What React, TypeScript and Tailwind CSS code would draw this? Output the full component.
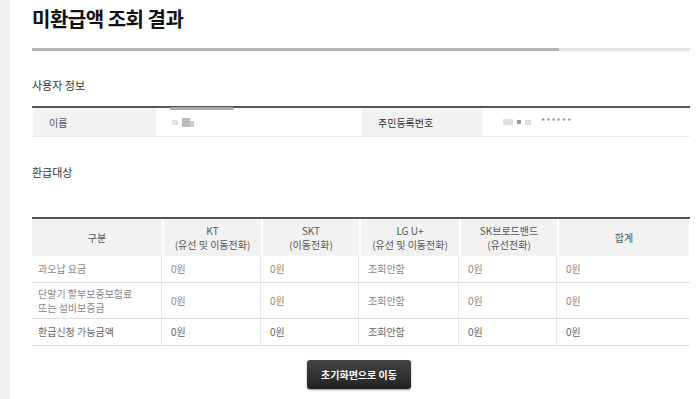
import React from "react";

const cols = "grid-cols-[130px_97px_96px_98px_96px_130px]";

function Cell({ children, className = "" }: { children?: React.ReactNode; className?: string }) {
  return <div className={`flex items-center ${className}`}>{children}</div>;
}

export default function App() {
  const rows = [
    { label: ["과오납 요금"], h: "h-[27px]", bold: false },
    { label: ["단말기 할부보증보험료", "또는 설비보증금"], h: "h-[36px]", bold: false },
    { label: ["환급신청 가능금액"], h: "h-[27px]", bold: true },
  ];
  return (
    <div className="w-[700px] h-[399px] bg-white flex overflow-hidden" style={{ fontFamily: '"Noto Sans CJK KR", "Noto Sans", sans-serif' }}>
      <div className="w-[10px] bg-[#efefef] shrink-0" />
      <div className="w-[658px] ml-[22px] min-w-0 flex flex-col">
        <h1 className="mt-[5px] text-[20px] leading-[28px] font-bold text-[#111] tracking-[-0.5px]">미환급액 조회 결과</h1>
        <div className="mt-[15px] flex h-[3px]">
          <div className="w-[527px] bg-[#b4b4b4]" />
          <div className="flex-1 bg-[#e2e2e2]" />
        </div>
        <div className="mt-[27px] text-[11px] leading-[14px] text-[#333]">사용자 정보</div>
        <div className="mt-[14px] h-[2px] bg-[#555]" />
        <div className="flex h-[29px] border-b border-[#ebebeb] text-[10px] text-[#555]">
          <div className="w-[123px] bg-[#f2f2f2] flex items-center pl-[16px] ml-px">이름</div>
          <div className="w-[206px] relative flex items-center pl-[16px] gap-[4px]">
            <div className="absolute left-[14px] top-[-1px] w-[64px] h-[3px] bg-[#aaa] rounded-full" />
            <div className="w-[6px] h-[5px] bg-[#e2e2e2]" />
            <div className="w-[8px] h-[9px] bg-[#bbb]" />
            <div className="w-[4px] h-[6px] bg-[#ccc] -ml-[4px] mt-[4px]" />
          </div>
          <div className="w-[121px] bg-[#f2f2f2] flex items-center pl-[16px] text-[#333]">주민등록번호</div>
          <div className="flex-1 flex items-center pl-[20px] gap-[4px]">
            <div className="w-[10px] h-[6px] bg-[#e0e0e0]" />
            <div className="w-[4px] h-[4px] bg-[#999]" />
            <div className="w-[6px] h-[5px] bg-[#ddd]" />
            <span className="ml-[6px] text-[9px] text-[#888] tracking-[1px]">******</span>
          </div>
        </div>
        <div className="mt-[28px] text-[11px] leading-[14px] text-[#333]">환급대상</div>
        <div className="mt-[38px] h-[2px] bg-[#555]" />
        <div className="text-[10px] leading-[14px]">
          <div className={`grid ${cols} gap-x-[2px] h-[37px] text-[#555] text-center`}>
            <Cell className="bg-[#f2f2f2] justify-center">구분</Cell>
            <Cell className="bg-[#f2f2f2] justify-center"><div>KT<br />(유선 및 이동전화)</div></Cell>
            <Cell className="bg-[#f2f2f2] justify-center"><div>SKT<br />(이동전화)</div></Cell>
            <Cell className="bg-[#f2f2f2] justify-center"><div>LG U+<br />(유선 및 이동전화)</div></Cell>
            <Cell className="bg-[#f2f2f2] justify-center"><div>SK브로드밴드<br />(유선전화)</div></Cell>
            <Cell className="bg-[#f2f2f2] justify-center">합계</Cell>
          </div>
          {rows.map((r, i) => (
            <div key={i} className={`grid ${cols} gap-x-[2px] ${r.h} border-b border-[#dcdcdc] ${r.bold ? "text-[#666]" : "text-[#888]"}`}>
              <Cell className="pl-[6px] border-r border-[#e8e8e8]"><div>{r.label.map((l, j) => <div key={j}>{l}</div>)}</div></Cell>
              <Cell className="pl-[7px] border-r border-[#e8e8e8]">0원</Cell>
              <Cell className="pl-[7px] border-r border-[#e8e8e8]">0원</Cell>
              <Cell className="pl-[7px] border-r border-[#e8e8e8]">조회안함</Cell>
              <Cell className="pl-[7px] border-r border-[#e8e8e8]">0원</Cell>
              <Cell className="pl-[7px]">0원</Cell>
            </div>
          ))}
        </div>
        <div className="mt-[14px] flex justify-center pr-[4px]">
          <button className="w-[104px] h-[29px] rounded-[3px] bg-gradient-to-b from-[#444] to-[#222] text-white text-[10px] font-bold shadow-[0_1px_2px_rgba(0,0,0,0.4)]">초기화면으로 이동</button>
        </div>
      </div>
    </div>
  );
}
